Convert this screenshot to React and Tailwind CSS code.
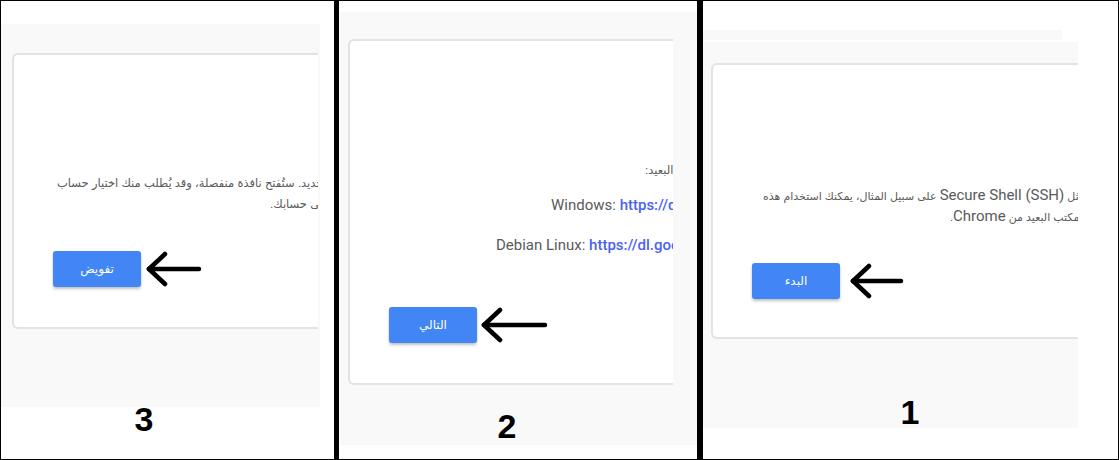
import React from 'react'

const arabic = { fontFamily: '"Liberation Sans", "DejaVu Sans", sans-serif' }
const latin = { fontFamily: 'Roboto, "Liberation Sans", "DejaVu Sans", sans-serif' }

function Arrow({ w }) {
  return (
    <svg width={w + 4} height="36" viewBox={`0 0 ${w + 4} 36`} className="shrink-0">
      <g stroke="#000" strokeWidth="4.5" strokeLinecap="round" strokeLinejoin="round" fill="none">
        <line x1="3" y1="18" x2={w + 1} y2="18" />
        <line x1="3" y1="18" x2="19" y2="3" />
        <line x1="3" y1="18" x2="19" y2="33" />
      </g>
    </svg>
  )
}

function Btn({ label }) {
  return (
    <button
      className="w-[88px] h-[36px] shrink-0 rounded-[3px] bg-[#4285f4] text-white text-[12px] shadow-[0_2px_3px_rgba(0,0,0,0.25)]"
      style={arabic}
      dir="rtl"
    >
      {label}
    </button>
  )
}

function Line({ ml, children, className = '' }) {
  return (
    <div className={`w-max whitespace-nowrap ${className}`} style={{ marginLeft: ml }}>
      {children}
    </div>
  )
}

function Label({ n, w, mt }) {
  return (
    <div className="text-center text-[34px] leading-none font-bold text-black" style={{ width: w, marginTop: mt, fontFamily: '"Liberation Sans", Arial, sans-serif' }}>
      {n}
    </div>
  )
}

function Card({ w, h, children }) {
  return (
    <div
      className="border-2 border-r-0 border-[#e3e3e3] rounded-l-[6px] bg-white overflow-hidden flex flex-col"
      style={{ width: w, height: h }}
    >
      {children}
    </div>
  )
}

export default function App() {
  return (
    <div className="w-[1119px] h-[460px] border border-black flex bg-white text-[#5a5a5a]">
      {/* step 3 */}
      <div className="w-[333px] h-full flex flex-col">
        <div className="h-[23px]" />
        <div className="w-[319px] h-[383px] bg-[#f9f9f9] pt-[29px] pl-[11px]">
          <Card w={306} h={276}>
            <div className="pt-[118px] text-[11.5px] leading-[21px]" style={arabic}>
              <Line ml={43}>
                <span dir="rtl">حساب جديد. ستُفتح نافذة منفصلة، وقد يُطلب منك اختيار حساب</span>
              </Line>
              <Line ml={256}>
                <span dir="rtl">الدخول إلى حسابك.</span>
              </Line>
            </div>
            <div className="mt-[36px] ml-[39px] flex items-center gap-[5px]">
              <Btn label="تفويض" />
              <Arrow w={52} />
            </div>
          </Card>
        </div>
        <Label n="3" w={286} mt={-5} />
      </div>

      <div className="w-[5px] h-full bg-black" />

      {/* step 2 */}
      <div className="w-[358px] h-full flex flex-col">
        <div className="h-[11px]" />
        <div className="ml-[1px] w-[357px] h-[433px] bg-[#f9f9f9] pt-[27px] pl-[8px]">
          <Card w={325} h={346}>
            <div className="pt-[119px] text-[11.5px] leading-[20px]" style={arabic}>
              <Line ml={295}>
                <span dir="rtl">سطح المكتب البعيد:</span>
              </Line>
            </div>
            <div className="text-[15px] leading-[20px]" style={latin}>
              <Line ml={201} className="mt-[15px]">
                Windows: <span className="text-[#4a62f2] font-medium">https://dl.google.com/edgedl/chrome-remote-desktop</span>
              </Line>
              <Line ml={146} className="mt-[20px]">
                Debian Linux: <span className="text-[#4a62f2] font-medium">https://dl.google.com/linux/direct</span>
              </Line>
            </div>
            <div className="mt-[52px] ml-[39px] flex items-center gap-[4px]">
              <Btn label="التالي" />
              <Arrow w={63} />
            </div>
          </Card>
          <Label n="2" w={318} mt={24} />
        </div>
      </div>

      <div className="w-[6px] h-full bg-black" />

      {/* step 1 */}
      <div className="w-[415px] h-full flex flex-col">
        <div className="h-[29px]" />
        <div className="w-[359px] h-[10px] bg-[#f9f9f9]" />
        <div className="h-[2px]" />
        <div className="w-[375px] h-[386px] bg-[#f9f9f9] pt-[21px] pl-[8px]">
          <Card w={367} h={276}>
            <div className="pt-[120px] text-[11px] leading-[20px]" style={arabic}>
              <Line ml={50}>
                <span dir="rtl">
                  مثل <span style={latin} className="text-[15px]">Secure Shell (SSH)</span> على سبيل المثال، يمكنك استخدام هذه
                </span>
              </Line>
              <Line ml={237}>
                <span dir="rtl">
                  المكتب البعيد من <span style={latin} className="text-[15px]">Chrome</span>.
                </span>
              </Line>
            </div>
            <div className="mt-[36px] ml-[39px] flex items-center gap-[10px]">
              <Btn label="البدء" />
              <Arrow w={50} />
            </div>
          </Card>
          <Label n="1" w={398} mt={56} />
        </div>
      </div>
    </div>
  )
}
